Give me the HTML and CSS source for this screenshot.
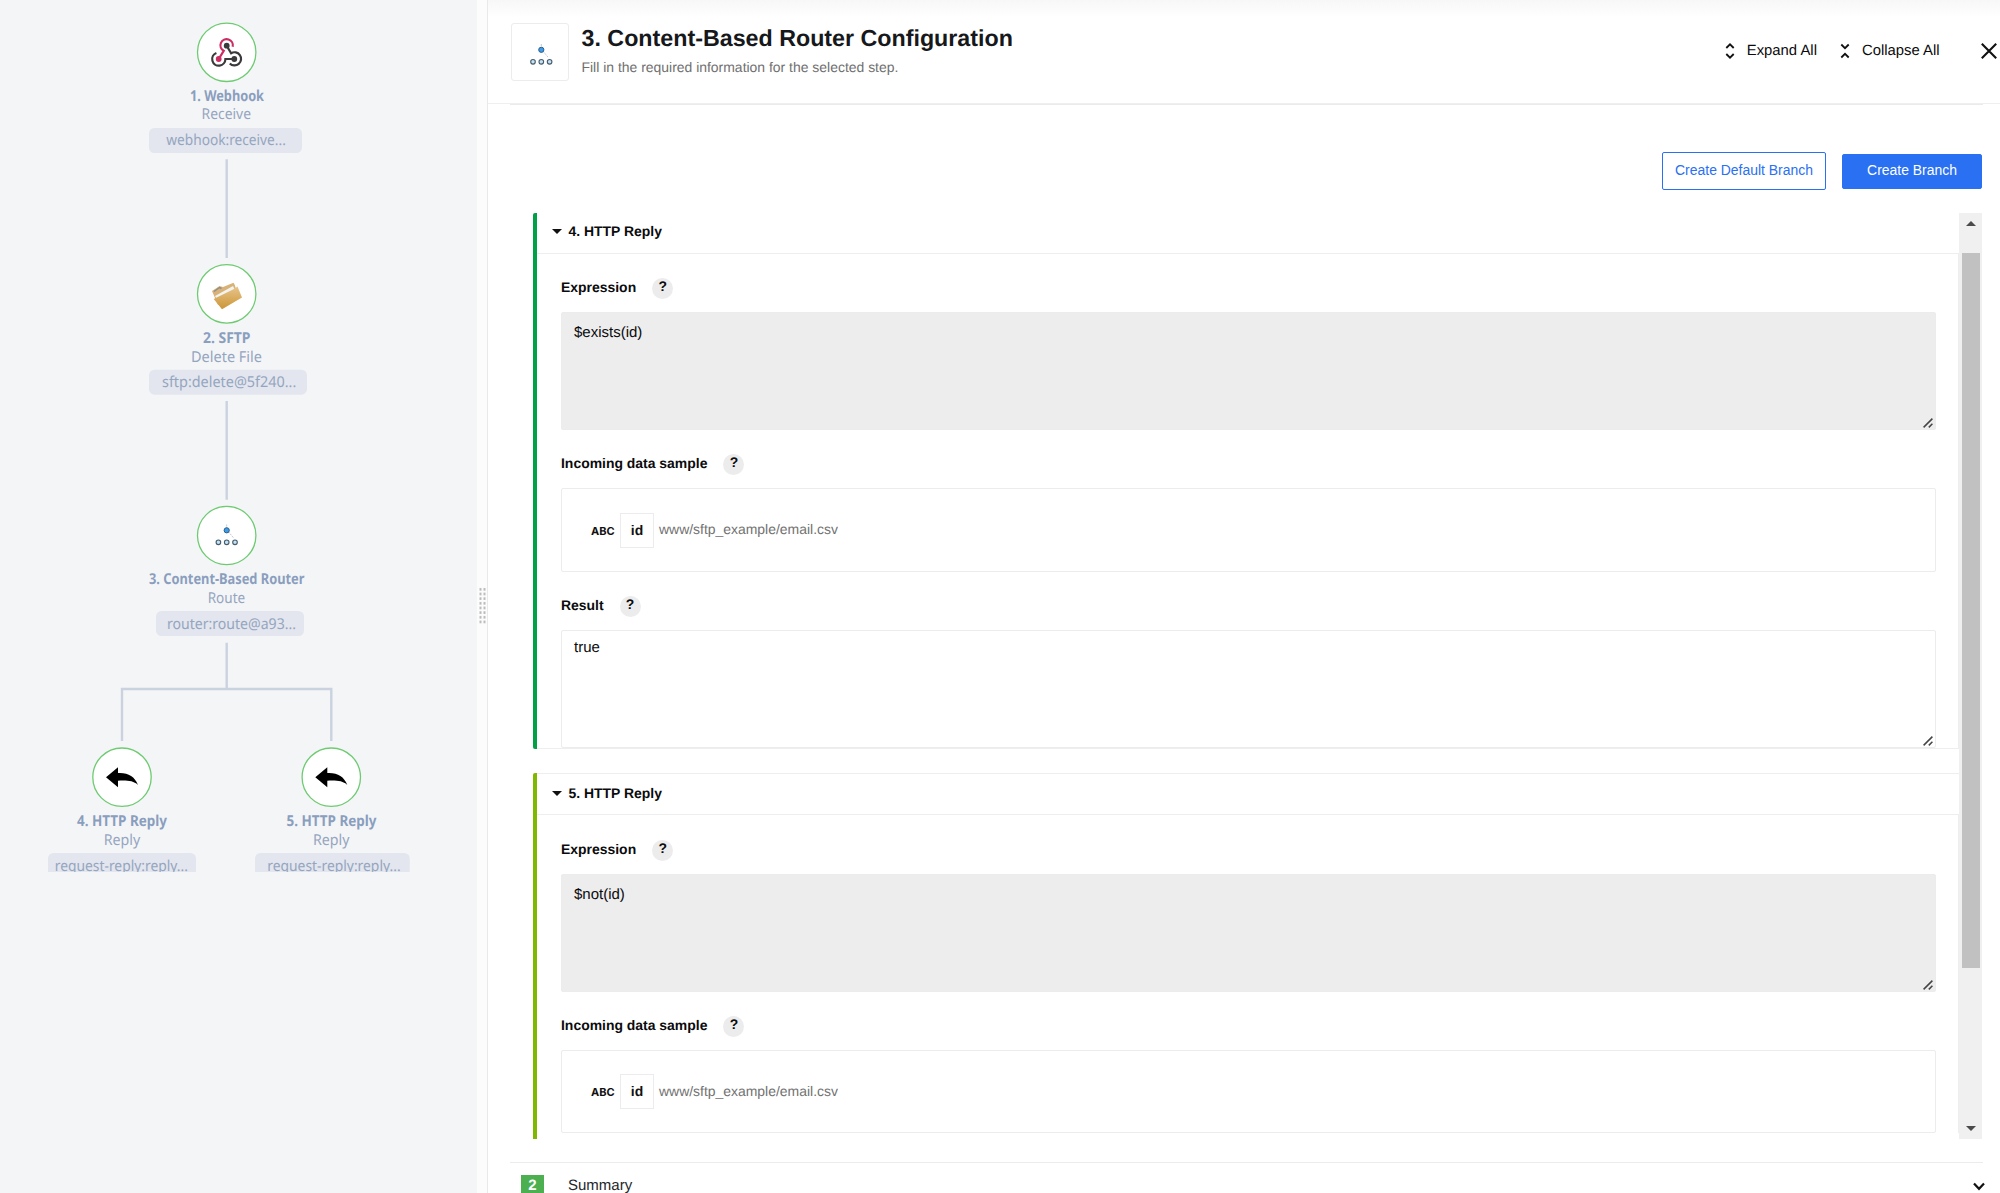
FILE: index.html
```html
<!DOCTYPE html>
<html lang="en">
<head>
<meta charset="utf-8">
<title>Content-Based Router Configuration</title>
<link rel="stylesheet" href="styles.css">
</head>
<body>
<div class="app">
  <aside class="flow">
    <svg class="flow-canvas" width="477" height="872" viewBox="0 0 477 872">
      <defs>
        <linearGradient id="folder" x1="0" y1="0" x2="0" y2="1">
          <stop offset="0" stop-color="#e8c48a"/><stop offset="1" stop-color="#cb9638"/>
        </linearGradient>
        <g id="reply"><path d="M-16 0L-4-10V-4.200C6-4.800 12.500-1 16 7.700C11 3.500 6 3.200-4 3.500V10Z"/></g>
        <g id="router">
          <path class="dash" d="M0-8.500V-4M1.500-1.500L7 5"/>
          <circle class="router-source" cy="-2.700" r="2.600"/>
          <circle class="router-target" cx="-8.300" cy="9.300" r="2.300"/>
          <circle class="router-target" cy="9.300" r="2.300"/>
          <circle class="router-target" cx="8.300" cy="9.300" r="2.300"/>
        </g>
      </defs>
      <g class="edges">
        <path d="M226.700 159.300V258M226.700 401V499.700M226.700 642.700V689M122 741V689H331.300V741"/>
      </g>
      <g class="rings">
        <circle cx="226.700" cy="52.300" r="29.200"/>
        <circle cx="226.700" cy="293.900" r="29.200"/>
        <circle cx="226.700" cy="535.500" r="29.200"/>
        <circle cx="122" cy="777.200" r="29.200"/>
        <circle cx="331.300" cy="777.200" r="29.200"/>
      </g>
      <g class="webhook">
        <path class="dark" d="M226.700 45.700L231.100 53.200A6.600 6.600 0 1 1 229.800 63.500M234.300 59H225.400A6.600 6.600 0 1 1 216.400 52.900"/>
        <path class="pink" d="M218.700 59L223.700 50.800A6.200 6.200 0 1 1 232.700 46.700"/>
        <circle cx="226.700" cy="45.700" r="2.900" fill="#3a3a3c"/>
        <circle cx="234.300" cy="59" r="2.900" fill="#3a3a3c"/>
        <circle cx="218.700" cy="59" r="2.900" fill="#cb2d62"/>
      </g>
      <g class="folder">
        <path d="M212 291L219.500 286L223 287L233.500 282.700L234.800 285L238 296L218 305Z" fill="#d9b277"/>
        <path d="M214 291.500L219.500 287.500L221.500 288.500" fill="none" stroke="#8b8e93" stroke-width="1.400"/>
        <path d="M215 296L233 286L235 290L217 299.500Z" fill="#f2f2f0"/>
        <path d="M213.700 299L234 289L237.500 286.500L242 297.500L222 309.200Z" fill="url(#folder)"/>
      </g>
      <use href="#router" x="226.700" y="533"/>
      <use href="#reply" x="122" y="777.200"/>
      <use href="#reply" x="331.300" y="777.200"/>
      <g class="pills">
        <rect x="149" y="128" width="153" height="25" rx="5.500"/>
        <rect x="149" y="369.700" width="158" height="25" rx="5.500"/>
        <rect x="156" y="611" width="148" height="25" rx="5.500"/>
        <rect x="48" y="853" width="148" height="25" rx="5.500"/>
        <rect x="255" y="853" width="154.700" height="25" rx="5.500"/>
      </g>
      <g class="names">
        <text x="190" y="100.700" textLength="74" lengthAdjust="spacingAndGlyphs">1. Webhook</text>
        <text x="203" y="342.700" textLength="47.500" lengthAdjust="spacingAndGlyphs">2. SFTP</text>
        <text x="149" y="584" textLength="155.500" lengthAdjust="spacingAndGlyphs">3. Content-Based Router</text>
        <text x="77" y="826" textLength="90" lengthAdjust="spacingAndGlyphs">4. HTTP Reply</text>
        <text x="286.500" y="826" textLength="90" lengthAdjust="spacingAndGlyphs">5. HTTP Reply</text>
      </g>
      <g class="details">
        <text x="201.500" y="119.300" textLength="49.500" lengthAdjust="spacingAndGlyphs">Receive</text>
        <text x="191" y="361.500" textLength="71" lengthAdjust="spacingAndGlyphs">Delete File</text>
        <text x="207.700" y="602.600" textLength="37.500" lengthAdjust="spacingAndGlyphs">Route</text>
        <text x="103.700" y="844.700" textLength="36.500" lengthAdjust="spacingAndGlyphs">Reply</text>
        <text x="313" y="844.700" textLength="36.500" lengthAdjust="spacingAndGlyphs">Reply</text>
        <text x="166.300" y="145.300" textLength="119.500" lengthAdjust="spacingAndGlyphs">webhook:receive...</text>
        <text x="162" y="387.300" textLength="134.300" lengthAdjust="spacingAndGlyphs">sftp:delete@5f240...</text>
        <text x="167" y="628.700" textLength="129" lengthAdjust="spacingAndGlyphs">router:route@a93...</text>
        <text x="54.700" y="870.700" textLength="133.300" lengthAdjust="spacingAndGlyphs">request-reply:reply...</text>
        <text x="267.300" y="870.700" textLength="133.300" lengthAdjust="spacingAndGlyphs">request-reply:reply...</text>
      </g>
    </svg>
  </aside>
  <div class="splitter"><div class="grip"></div></div>
  <main class="panel">
    <header class="panel-head">
      <div class="step-icon"><svg width="56" height="56" viewBox="-27 -31 56 56"><g transform="translate(2.300 -2.500)"><use href="#router"/></g></svg></div>
      <div class="titles">
        <h1>3. Content-Based Router Configuration</h1>
        <p>Fill in the required information for the selected step.</p>
      </div>
      <div class="head-actions">
        <svg class="fold" width="10" height="16" viewBox="0 0 10 16"><path d="M1.300 5L5 1.300L8.700 5M1.300 11L5 14.700L8.700 11"/></svg>
        <span class="expand">Expand All</span>
        <svg class="fold" width="10" height="16" viewBox="0 0 10 16"><path d="M1.300 1.500L5 5.200L8.700 1.500M1.300 14.500L5 10.800L8.700 14.500"/></svg>
        <span class="collapse">Collapse All</span>
        <svg class="close" width="16" height="16" viewBox="0 0 16 16"><path d="M.8.800L15.200 15.200M15.200.800L.8 15.200"/></svg>
      </div>
    </header>
    <section class="content">
      <div class="buttons">
        <button class="btn outline">Create Default Branch</button>
        <button class="btn solid">Create Branch</button>
      </div>
      <div class="branches">
        <div class="branch-list">
          <article class="branch first">
            <h2><i class="caret"></i>4. HTTP Reply</h2>
            <div class="fields">
              <div class="label">Expression <b class="help">?</b></div>
              <div class="area filled">$exists(id)<svg class="resize" width="10" height="10" viewBox="0 0 10 10"><path d="M.6 9.400L9.400.6M5.800 9.400L9.400 5.800"/></svg></div>
              <div class="label">Incoming data sample <b class="help">?</b></div>
              <div class="sample"><span class="type">ABC</span><span class="key">id</span><span class="path">www/sftp_example/email.csv</span></div>
              <div class="label">Result <b class="help">?</b></div>
              <div class="area result">true<svg class="resize" width="10" height="10" viewBox="0 0 10 10"><path d="M.6 9.400L9.400.6M5.800 9.400L9.400 5.800"/></svg></div>
            </div>
          </article>
          <article class="branch second">
            <h2><i class="caret"></i>5. HTTP Reply</h2>
            <div class="fields">
              <div class="label">Expression <b class="help">?</b></div>
              <div class="area filled">$not(id)<svg class="resize" width="10" height="10" viewBox="0 0 10 10"><path d="M.6 9.400L9.400.6M5.800 9.400L9.400 5.800"/></svg></div>
              <div class="label">Incoming data sample <b class="help">?</b></div>
              <div class="sample"><span class="type">ABC</span><span class="key">id</span><span class="path">www/sftp_example/email.csv</span></div>
            </div>
          </article>
        </div>
        <div class="scrollbar"><i class="up"></i><div class="thumb"></div><i class="down"></i></div>
      </div>
    </section>
    <footer class="summary">
      <span class="number">2</span><span>Summary</span>
      <svg class="chevron" width="12" height="9" viewBox="0 0 12 9"><path d="M1 1.500L6 6.800L11 1.500"/></svg>
    </footer>
  </main>
</div>
</body>
</html>
```

FILE: styles.css
```css
* { box-sizing: border-box; }
body {
  margin: 0;
  height: 1193px;
  overflow: hidden;
  background: #fff;
  color: #0b0b0d;
  font: 13.95px/20px "Liberation Sans", Arial, sans-serif;
  text-rendering: geometricPrecision;
}
h1, h2, p { margin: 0; }
svg { display: block; flex: none; }
.app { display: flex; height: 1193px; }

/* Flow diagram */
.flow { width: 477px; flex: none; background: #f4f5f7; }
.flow-canvas { font-family: "Noto Sans", "Open Sans", sans-serif; }
.edges path { fill: none; stroke: #cbd2df; stroke-width: 2.4; }
.rings circle { fill: #fff; stroke: #6ecb72; stroke-width: 1.3; }
.pills rect { fill: #e3e6ee; }
.names { font-size: 15px; font-weight: 700; fill: #8a9ebe; }
.details { font-size: 15px; fill: #94a5c0; }
.webhook path { fill: none; stroke-width: 2.2; }
.webhook .dark { stroke: #3a3a3c; }
.webhook .pink { stroke: #cb2d62; }
.router-source { fill: #3d9be9; stroke: #2b5f8c; stroke-width: 1; }
.router-target { fill: #c3e2f6; stroke: #465c6b; stroke-width: 1.1; }
.dash { fill: none; stroke: #b4bac4; stroke-width: .8; stroke-dasharray: 2 1; }

.splitter {
  width: 11px;
  flex: none;
  padding: 587px 0 0 2px;
  background: #fcfcfc;
  border-right: 1px solid #e9e9eb;
}
.grip {
  width: 7px;
  height: 37px;
  background: radial-gradient(circle, #b9b9b9 1px, transparent 1.5px) -.5px 0 / 4px 4.67px;
}

/* Configuration panel */
.panel { flex: 1; display: flex; flex-direction: column; min-width: 0; }
.panel-head {
  height: 104px;
  flex: none;
  display: flex;
  align-items: flex-start;
  padding: 23px 3px 0 23px;
  border-bottom: 1px solid #efefef;
  background: linear-gradient(#f7f7f7, #fff 17px);
}
.step-icon { width: 58px; height: 58px; border: 1px solid #ececec; border-radius: 3px; background: #fff; }
.titles { padding: 1px 0 0 12.5px; }
h1 { font-size: 23.25px; line-height: 29px; color: #16181b; }
.titles p { padding-top: 4px; color: #6f6f6f; }
.head-actions { margin: 9px 0 0 auto; display: flex; align-items: center; height: 36px; padding-top: 2px; font-size: 14.85px; }
.fold { fill: none; stroke: #111; stroke-width: 1.8; }
.expand { margin: -1px 23.5px 0 11.5px; }
.collapse { margin: -1px 41.5px 0 11.5px; }
.close { fill: none; stroke: #111; stroke-width: 2.1; }
.content { margin: 0 17px 0 21.5px; height: 1059px; border-top: 1px solid #ebebeb; border-bottom: 1px solid #ececec; flex: none; }
.buttons { display: flex; justify-content: flex-end; align-items: center; gap: 16px; padding: 47px 1px 0 0; height: 85px; }
.btn { font: inherit; padding: 0 0 2px; border-radius: 2px; border: 1px solid #2970f2; }
.outline { width: 164px; height: 38px; color: #2970f2; background: #fff; }
.solid { width: 140px; height: 35px; color: #fff; background: #2970f2; }
.branches { display: flex; height: 926px; margin: 23px 1px 0 23px; }
.branch-list { flex: 1; overflow: hidden; }
.branch { border-left: 4px solid; border-radius: 2px; }
.first { border-color: #00a046; }
.second { margin-top: 24px; border-color: #80b800; height: 520px; }
.branch h2 {
  height: 41px;
  display: flex;
  align-items: center;
  padding: 0 0 5px 16px;
  border-bottom: 1px solid #eee;
  font-size: inherit;
}
.second h2 { height: 42px; padding-bottom: 3px; border-top: 1px solid #eee; }
.caret { border: 5px solid transparent; border-top-color: #111; border-bottom: 0; margin: 2px 6.5px 0 -.5px; }
.fields { padding: 24px 22px 0 24.5px; border-right: 1px solid #eee; }
.first .fields { height: 495px; border-bottom: 1px solid #eee; }
.second .fields { padding-top: 25px; }
.label { display: flex; gap: 16px; font-weight: bold; height: 20px; line-height: 19px; margin-bottom: 14px; }
.help { width: 21px; height: 21px; border-radius: 50%; background: #ececec; text-align: center; line-height: 17px; }
.area { position: relative; height: 118px; border: 1px solid #ececec; border-radius: 2px; padding: 10px 12px; font-size: 15px; margin-bottom: 24px; }
.filled { background: #ededed; }
.result { padding-top: 7px; }
.resize { position: absolute; right: 2px; bottom: 1px; stroke: #444; stroke-width: 1.5; fill: none; }
.sample { display: flex; align-items: center; height: 84px; border: 1px solid #ececec; border-radius: 2px; padding: 0 29px; margin-bottom: 24px; color: #717171; }
.second .sample { height: 83px; }
.type { font: bold 11px/20px Inter, sans-serif; color: #111; padding-top: 1px; width: 29px; }
.key { width: 34px; height: 35px; border: 1px solid #ececec; color: #111; font-weight: bold; text-align: center; line-height: 33px; margin-right: 5px; }
.path { padding-bottom: 2px; }
.scrollbar { width: 23px; background: #f0f0f0; display: flex; flex-direction: column; align-items: center; padding: 8px 0 8px; }
.thumb { width: 18px; height: 715px; margin-top: 27px; background: #c1c1c1; }
.up, .down { border: 5px solid transparent; }
.up { border-top: 0; border-bottom-color: #4a4a4a; }
.down { margin-top: auto; border-bottom: 0; border-top-color: #4a4a4a; }
.summary { display: flex; padding: 12px 15.5px 0 33px; font-size: 15px; color: #24272b; line-height: 22px; }
.number { width: 23px; height: 23px; margin-right: 24px; background: #4caf50; color: #fff; font-weight: bold; text-align: center; }
.chevron { margin: 7px 0 0 auto; fill: none; stroke: #111; stroke-width: 2.2; }
```
